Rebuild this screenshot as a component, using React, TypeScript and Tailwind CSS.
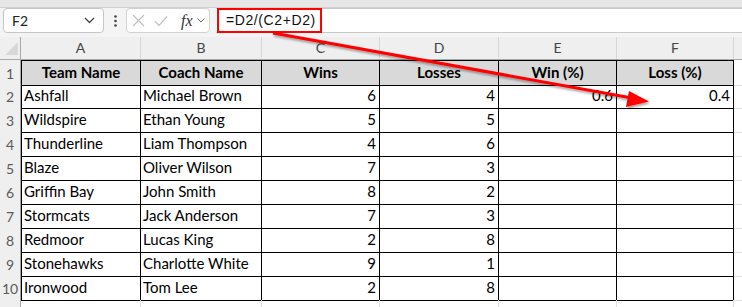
import React from "react";

const cols = ["A", "B", "C", "D", "E", "F"];

const rows: [string, string, number, number, string, string][] = [
  ["Ashfall", "Michael Brown", 6, 4, "0.6", "0.4"],
  ["Wildspire", "Ethan Young", 5, 5, "", ""],
  ["Thunderline", "Liam Thompson", 4, 6, "", ""],
  ["Blaze", "Oliver Wilson", 7, 3, "", ""],
  ["Griffin Bay", "John Smith", 8, 2, "", ""],
  ["Stormcats", "Jack Anderson", 7, 3, "", ""],
  ["Redmoor", "Lucas King", 2, 8, "", ""],
  ["Stonehawks", "Charlotte White", 9, 1, "", ""],
  ["Ironwood", "Tom Lee", 2, 8, "", ""],
];

const grid = "grid grid-cols-[21px_120px_121px_118px_119px_118px_117px_8px]";

function RowNum({ n }: { n?: number }) {
  return (
    <div className="flex items-end justify-center pb-[1px] bg-[#efefef] border-r border-[#a8a8a8] border-b border-b-[#dcdcdc] text-[14px] text-[#5a5a5a]">
      {n}
    </div>
  );
}

export default function App() {
  return (
    <div className="relative w-[742px] h-[307px] overflow-hidden bg-white font-['Lato',sans-serif] text-black">
      {/* top strip */}
      <div className="h-[8px] bg-[#e6e6e6] border-b border-[#cfcfcf]" />

      {/* formula bar */}
      <div className="flex h-[25px] bg-[#f4f4f4]">
        <div className="ml-[3px] w-[101px] h-[25px] flex items-center justify-between px-[8px] bg-white border border-[#c6c6c6] rounded-[4px]">
          <span className="text-[14px] text-[#222]">F2</span>
          <svg width="11" height="7" viewBox="0 0 11 7">
            <path d="M1 1l4.5 4.5L10 1" fill="none" stroke="#444" strokeWidth="1.3" />
          </svg>
        </div>
        <div className="w-[22px] flex items-center justify-center">
          <svg width="3" height="12" viewBox="0 0 3 12">
            <circle cx="1.5" cy="1.5" r="1.3" fill="#444" />
            <circle cx="1.5" cy="6" r="1.3" fill="#444" />
            <circle cx="1.5" cy="10.5" r="1.3" fill="#444" />
          </svg>
        </div>
        <div className="w-[84px] h-[25px] flex items-center gap-[9px] pl-[5px] bg-white border border-[#d2d2d2] rounded-[4px]">
          <svg width="13" height="13" viewBox="0 0 13 13">
            <path d="M1 1l11 11M12 1L1 12" stroke="#c0c0c0" strokeWidth="1.2" />
          </svg>
          <svg width="14" height="12" viewBox="0 0 14 12">
            <path d="M1 6.5l4 4L13 1.5" fill="none" stroke="#c0c0c0" strokeWidth="1.2" />
          </svg>
          <span className="font-['Liberation_Serif',serif] italic text-[16px] text-[#333] ml-[4px] leading-none">fx</span>
          <svg width="8" height="5" viewBox="0 0 8 5" className="-ml-[5px]">
            <path d="M0.5 0.5l3.5 3.5 3.5-3.5" fill="none" stroke="#666" strokeWidth="1" />
          </svg>
        </div>
        <div className="ml-[6px] flex-1 h-[25px] bg-white border-y border-[#c8c8c8] pl-[1px]">
          <div className="w-[105px] h-[25px] -mt-[1px] border-2 border-[#ff0000] flex items-center pl-[7px] text-[14px] tracking-[0.6px] text-[#111] font-['Liberation_Sans',sans-serif]">
            =D2/(C2+D2)
          </div>
        </div>
      </div>

      {/* gap */}
      <div className="h-[4px] bg-[#f4f4f4]" />

      {/* column headers */}
      <div className={`${grid} h-[23px] bg-[#efefef] border-b border-[#a8a8a8]`}>
        <div className="relative border-r border-[#a8a8a8]">
          <svg width="14" height="14" viewBox="0 0 14 14" className="absolute left-[5px] top-[5px]">
            <path d="M13 0V13H0Z" fill="#d8d8d8" />
          </svg>
        </div>
        {cols.map((c) => (
          <div key={c} className="flex items-end justify-center pb-[1px] text-[14px] text-[#444] border-r border-[#d6d6d6]">
            {c}
          </div>
        ))}
        <div />
      </div>

      {/* header row */}
      <div className={`${grid} h-[24px]`}>
        <RowNum n={1} />
        {["Team Name", "Coach Name", "Wins", "Losses", "Win (%)", "Loss (%)"].map((h, i) => (
          <div
            key={h}
            className={`flex items-end justify-center pb-[1px] bg-[#d9d9d9] font-bold text-[15px] border-t border-b border-r border-black ${i === 0 ? "border-l" : ""}`}
          >
            {h}
          </div>
        ))}
        <div className="border-b border-[#e0e0e0]" />
      </div>

      {rows.map((r, idx) => (
        <div key={idx} className={`${grid} h-[24px]`}>
          <RowNum n={idx + 2} />
          <div className="flex items-end pl-[2px] pb-[1px] text-[15px] border-l border-r border-b border-black">{r[0]}</div>
          <div className="flex items-end pl-[2px] pb-[1px] text-[15px] border-r border-b border-black">{r[1]}</div>
          <div className="flex items-end justify-end pr-[3px] pb-[1px] text-[15px] border-r border-b border-black">{r[2]}</div>
          <div className="flex items-end justify-end pr-[3px] pb-[1px] text-[15px] border-r border-b border-black">{r[3]}</div>
          <div className="flex items-end justify-end pr-[3px] pb-[1px] text-[15px] border-r border-b border-black">{r[4]}</div>
          <div className="flex items-end justify-end pr-[3px] pb-[1px] text-[15px] border-r border-b border-black">{r[5]}</div>
          <div className="border-b border-[#e0e0e0]" />
        </div>
      ))}

      {/* row 11, only its top edge shows */}
      <div className={`${grid} h-[24px]`}>
        <RowNum />
        <div className="border-r border-[#e0e0e0]" />
        <div className="border-r border-[#e0e0e0]" />
        <div className="border-r border-[#e0e0e0]" />
        <div className="border-r border-[#e0e0e0]" />
        <div className="border-r border-[#e0e0e0]" />
        <div className="border-r border-[#e0e0e0]" />
      </div>

      {/* annotation arrow */}
      <svg className="absolute left-0 top-0 pointer-events-none" width="742" height="307" viewBox="0 0 742 307">
        <defs>
          <filter id="sh" x="-10%" y="-10%" width="120%" height="140%">
            <feDropShadow dx="1" dy="2" stdDeviation="1.2" floodColor="#000" floodOpacity="0.35" />
          </filter>
        </defs>
        <g filter="url(#sh)">
          <line x1="273" y1="33" x2="632" y2="98" stroke="#ff0000" strokeWidth="3" />
          <path d="M649 101.5L629 91L626 107Z" fill="#ff0000" />
        </g>
      </svg>
    </div>
  );
}
